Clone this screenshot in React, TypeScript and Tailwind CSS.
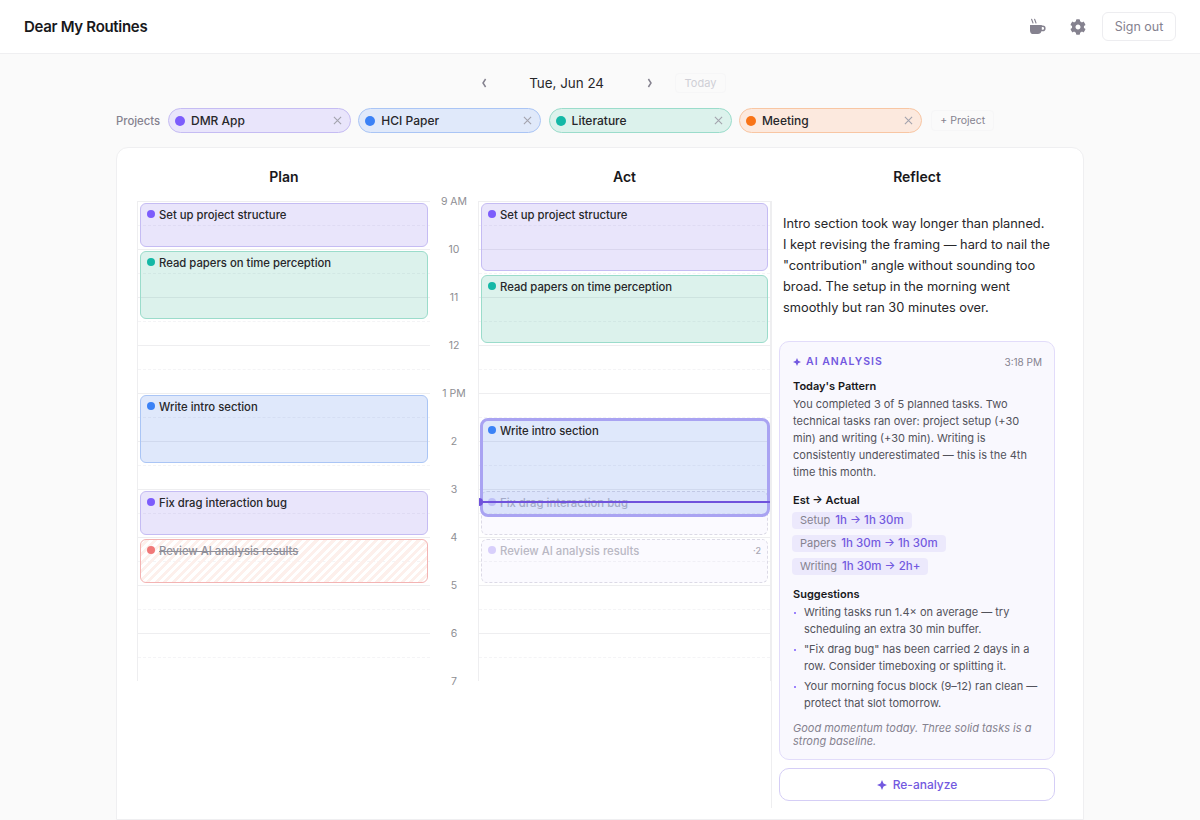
import React from 'react';
import { FaCog } from 'react-icons/fa';

const projects = [
  { name: 'DMR App', chip: 'bg-[#e9e5fb] border-[#c5bcf3]', dot: 'bg-[#7c5cfc]' },
  { name: 'HCI Paper', chip: 'bg-[#e0e9fa] border-[#aac5f5]', dot: 'bg-[#3b82f6]' },
  { name: 'Literature', chip: 'bg-[#dcf2ec] border-[#9bdccb]', dot: 'bg-[#14b8a6]' },
  { name: 'Meeting', chip: 'bg-[#fce9de] border-[#f8c6a3]', dot: 'bg-[#f97316]' },
];

const purple = 'bg-[#6c52e4]/15 border-[#c5bcf3]';
const teal = 'bg-[#16a880]/15 border-[#9bdccb]';
const blue = 'bg-[#2a66e4]/15 border-[#aac5f5]';

const hours = ['9 AM', '10', '11', '12', '1 PM', '2', '3', '4', '5', '6', '7'];

const CoffeeIcon = () => (
  <svg width="18" height="18" viewBox="0 0 18 18" className="text-[#85828f]">
    <path d="M2.6 1.2 L4 5 M5.6 1.2 L7 5" stroke="currentColor" strokeWidth="1.1" strokeLinecap="round" fill="none" />
    <path fill="currentColor" d="M1 7h11.8v.6h1a2.7 2.7 0 0 1 0 5.6h-1.4A3.6 3.6 0 0 1 8.9 16H4.6A3.6 3.6 0 0 1 1 12.4zM12.8 9v2.8h.9a1.4 1.4 0 0 0 0-2.8z" />
  </svg>
);

const Chevron = ({ left }: { left?: boolean }) => (
  <svg width="6" height="10" viewBox="0 0 6 10" className="text-[#85828f]">
    <path d={left ? 'M4.6 1 2 5l2.6 4' : 'M1.4 1 4 5 1.4 9'} stroke="currentColor" strokeWidth="1.5" fill="none" />
  </svg>
);

const Sparkle = ({ className }: { className: string }) => (
  <svg viewBox="0 0 10 10" className={className}>
    <path fill="currentColor" d="M5 0 6.5 3.5 10 5 6.5 6.5 5 10 3.5 6.5 0 5 3.5 3.5z" />
  </svg>
);

// half hour rows behind the events
const GridLines = () => (
  <>
    {Array.from({ length: 20 }).map((_, i) => (
      <div
        key={i}
        className={`h-6 border-t ${i % 2 === 0 ? 'border-solid border-[#eeeef0]' : 'border-dashed border-[#f4f4f6]'}`}
      />
    ))}
  </>
);

const Event = ({ top, height, color, dot, title }: { top: number; height: number; color: string; dot: string; title: string }) => (
  <div
    className={`absolute left-[2px] right-[2px] rounded-md border ${color}`}
    style={{ top, height }}
  >
    <div className="flex items-center pl-[6px] pt-[4px] text-[11.3px] leading-[14px] font-medium text-[#27272a]">
      <span className={`w-2 h-2 rounded-full mr-[4px] -mt-[2px] ${dot}`} />
      {title}
    </div>
  </div>
);

const Ghost = ({ top, title, badge }: { top: number; title: string; badge?: string }) => (
  <div
    className="absolute left-[2px] right-[2px] h-[44px] rounded-md border border-dashed border-[#dcdae6] bg-[#7c5cfc]/[0.03]"
    style={{ top }}
  >
    <div className="flex items-center pl-[6px] pr-[6px] pt-[4px] text-[11.3px] leading-[14px] font-medium text-[#b9b8c4]">
      <span className="w-2 h-2 rounded-full mr-[4px] -mt-[2px] bg-[#d8cffb]" />
      <span className="flex-1">{title}</span>
      {badge && <span className="text-[9px] text-[#a9a8b4]">{badge}</span>}
    </div>
  </div>
);

const Pill = ({ label, value }: { label: string; value: string }) => (
  <div className="self-start h-[17px] flex items-center gap-[5px] px-2 -ml-[1px] rounded-[4px] bg-[#ecE9fc] text-[11px] font-medium">
    <span className="font-normal text-[#85828f]">{label}</span>
    <span className="text-[11.5px] text-[#7359e0]">{value}</span>
  </div>
);

const Bullet = ({ children }: { children: React.ReactNode }) => (
  <li className="relative pl-[11px] text-[11px] leading-[17px] text-[#52525b]">
    <span className="absolute left-[1px] top-[8px] w-[2px] h-[2px] rounded-full bg-[#7c5cfc]" />
    {children}
  </li>
);

export default function App() {
  return (
    <div className="h-screen overflow-hidden flex flex-col bg-[#fafafa] font-['Inter',sans-serif] antialiased">
      <header className="h-[54px] shrink-0 flex items-center justify-between pl-6 pr-6 bg-white border-b border-[#efeff1]">
        <div className="pt-[1px] text-[15px] font-semibold text-[#18181b] tracking-[-0.3px]">Dear My Routines</div>
        <div className="flex items-center">
          <CoffeeIcon />
          <FaCog className="ml-[23px] w-4 h-4 text-[#85828f]" />
          <button className="ml-4 h-[29px] w-[74px] pt-[1px] rounded-md border border-[#ededf0] text-[12.5px] text-[#85828f]">Sign out</button>
        </div>
      </header>

      <div className="h-[30px] mt-[14px] shrink-0 flex items-center justify-center pl-[7px]">
        <Chevron left />
        <span className="w-[160px] text-center text-[13.4px] text-[#27272a]">Tue, Jun 24</span>
        <Chevron />
        <span className="ml-[22px] h-[20px] pt-[1px] px-[9px] flex items-center rounded border border-[#f6f6f7] text-[11px] text-[#cfcfd6]">Today</span>
      </div>

      <div className="mt-[10px] shrink-0 w-[968px] mx-auto flex items-center h-[25px]">
        <span className="w-[52px] pt-[2px] text-[11.3px] font-medium text-[#85828f]">Projects</span>
        {projects.map((p) => (
          <div key={p.name} className={`w-[183px] h-[25px] mr-[7.3px] flex items-center rounded-full border pl-[6px] pr-[8px] text-xs font-medium text-[#27272a] ${p.chip}`}>
            <span className={`w-[10px] h-[10px] rounded-full mr-[6px] ${p.dot}`} />
            <span className="flex-1">{p.name}</span>
            <svg width="9" height="9" viewBox="0 0 10 10" className="text-[#a3a3ad]"><path d="M1 1l8 8M9 1l-8 8" stroke="currentColor" strokeWidth="1.2" /></svg>
          </div>
        ))}
        <span className="ml-[2px] h-[21px] w-[63px] flex items-center justify-center rounded border border-[#f6f6f7] text-[10.5px] text-[#85828f]">+ Project</span>
      </div>

      <main className="mt-[14px] w-[968px] mx-auto flex-1 rounded-t-xl border border-[#efeff1] bg-white px-5 pt-[21px]">
        <div className="grid grid-cols-[294px_47px_293px_292px]">
          <div className="h-4 mb-4 text-center text-sm leading-4 font-semibold text-[#18181b]">Plan</div>
          <div />
          <div className="h-4 mb-4 text-center text-sm leading-4 font-semibold text-[#18181b]">Act</div>
          <div className="h-4 mb-4 text-center text-sm leading-4 font-semibold text-[#18181b]">Reflect</div>

          <div className="relative h-[480px] border-l border-r border-l-[#eeeef0] border-r-transparent">
            <GridLines />
            <Event top={2} height={44} color={purple} dot="bg-[#7c5cfc]" title="Set up project structure" />
            <Event top={50} height={68} color={teal} dot="bg-[#14b8a6]" title="Read papers on time perception" />
            <Event top={194} height={68} color={blue} dot="bg-[#3b82f6]" title="Write intro section" />
            <Event top={290} height={44} color={purple} dot="bg-[#7c5cfc]" title="Fix drag interaction bug" />
            <div className="absolute left-[2px] right-[2px] top-[338px] h-[44px] rounded-md border border-[#f3b3b3] bg-[repeating-linear-gradient(135deg,transparent_0,transparent_3px,#fdf0ec_3px,#fdf0ec_6px)]">
              <div className="flex items-center pl-[6px] pt-[4px] text-[11.3px] leading-[14px] font-medium text-[#8f8f99]">
                <span className="w-2 h-2 rounded-full mr-[4px] -mt-[2px] bg-[#f07878]" />
                <span className="line-through">Review AI analysis results</span>
              </div>
            </div>
          </div>

          <div className="-mt-6 h-[504px] pr-[1px]">
            {hours.map((h) => (
              <div key={h} className="h-12 pt-[2px] flex items-center justify-center text-[10.5px] text-[#8e8e93]">{h}</div>
            ))}
          </div>

          <div className="relative h-[480px] border-l border-r border-[#eeeef0]">
            <GridLines />
            <Event top={2} height={68} color={purple} dot="bg-[#7c5cfc]" title="Set up project structure" />
            <Event top={74} height={68} color={teal} dot="bg-[#14b8a6]" title="Read papers on time perception" />
            <Ghost top={290} title="Fix drag interaction bug" />
            <Ghost top={338} title="Review AI analysis results" badge="·2" />
            <div className="absolute left-[1px] right-0 top-[217px] h-[99px] rounded-lg border-[3px] border-[#a9a3f2] bg-[#2a66e4]/15">
              <div className="flex items-center pl-[5px] pt-[3px] text-[11.3px] leading-[14px] font-medium text-[#27272a]">
                <span className="w-2 h-2 rounded-full mr-[4px] -mt-[2px] bg-[#3b82f6]" />
                Write intro section
              </div>
            </div>
            <div className="absolute left-0 right-0 top-[300px] h-[2px] bg-[#6f52dc]" />
            <div className="absolute left-0 top-[297px] w-[4px] h-[8px] rounded-r-full bg-[#6f52dc]" />
          </div>

          <div className="h-[607px] border-l border-[#eeeef0] pl-[7px] pr-2">
            <p className="pt-[12px] px-1 text-[12.8px] leading-[21px] text-[#27272a] whitespace-nowrap">
              Intro section took way longer than planned.<br />
              I kept revising the framing — hard to nail the<br />
              "contribution" angle without sounding too<br />
              broad. The setup in the morning went<br />
              smoothly but ran 30 minutes over.
            </p>
            <section className="mt-[23px] h-[419px] rounded-[10px] border border-[#e2dcfa] bg-[#f9f8fe] pt-[13px] pl-[13px] pr-[12px]">
              <div className="flex items-center justify-between h-[14px]">
                <div className="flex items-center text-[10.5px] font-semibold tracking-[1px] text-[#7359e0]">
                  <Sparkle className="w-2 h-2 mr-[5px]" />
                  AI ANALYSIS
                </div>
                <span className="text-[10px] text-[#85828f]">3:18 PM</span>
              </div>
              <h4 className="mt-[10px] text-[11px] leading-[14px] font-semibold text-[#18181b]">Today's Pattern</h4>
              <p className="mt-[3px] text-[11px] leading-[17px] text-[#52525b]">
                You completed 3 of 5 planned tasks. Two technical tasks ran over: project setup (+30 min) and writing (+30 min). Writing is consistently underestimated — this is the 4th time this month.
              </p>
              <h4 className="mt-[12px] text-[11px] leading-[14px] font-semibold text-[#18181b]">Est → Actual</h4>
              <div className="mt-[5px] flex flex-col gap-[6px]">
                <Pill label="Setup" value="1h → 1h 30m" />
                <Pill label="Papers" value="1h 30m → 1h 30m" />
                <Pill label="Writing" value="1h 30m → 2h+" />
              </div>
              <h4 className="mt-[12px] text-[11px] leading-[14px] font-semibold text-[#18181b]">Suggestions</h4>
              <ul className="mt-[3px] flex flex-col gap-[3px]">
                <Bullet>Writing tasks run 1.4× on average — try scheduling an extra 30 min buffer.</Bullet>
                <Bullet>"Fix drag bug" has been carried 2 days in a row. Consider timeboxing or splitting it.</Bullet>
                <Bullet>Your morning focus block (9–12) ran clean — protect that slot tomorrow.</Bullet>
              </ul>
              <p className="mt-[10px] text-[11px] leading-[13px] italic text-[#85828f]">
                Good momentum today. Three solid tasks is a strong baseline.
              </p>
            </section>
            <button className="mt-2 w-full h-[33px] flex items-center justify-center gap-[6px] rounded-[10px] border border-[#d5cef6] bg-white text-xs font-medium text-[#7359e0]">
              <Sparkle className="w-[10px] h-[10px]" />
              Re-analyze
            </button>
          </div>
        </div>
      </main>
    </div>
  );
}
